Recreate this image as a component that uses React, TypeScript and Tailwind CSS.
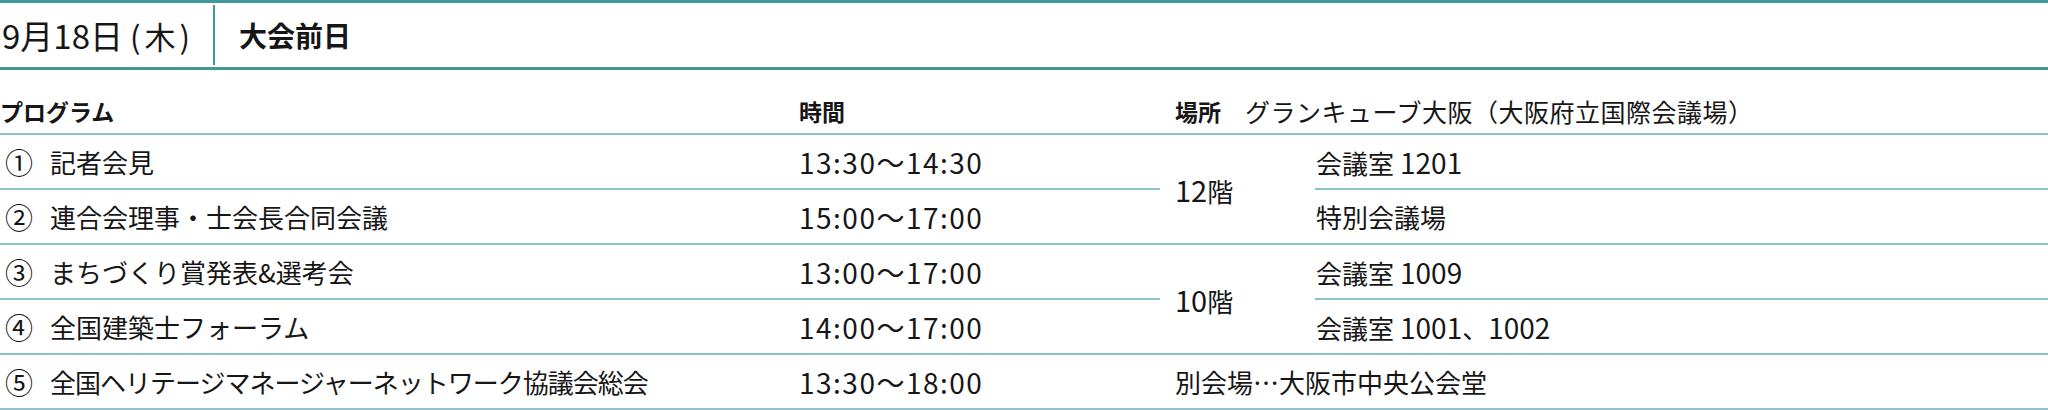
const rowLine = "border-b-2 border-[#8cc4c9]";

const Cell = ({ className = "", children }: { className?: string; children?: React.ReactNode }) => (
  <div className={`flex items-center h-[55px] ${rowLine} ${className}`}>
    <span>{children}</span>
  </div>
);

const Prog = ({ n, text, tight = false }: { n: string; text: string; tight?: boolean }) => (
  <div className={`flex items-center h-[55px] pl-[5px] ${rowLine}`}>
    <span className="text-[28px]">{n}</span>
    <span className={`ml-[17px] ${tight ? "tracking-[-1px]" : ""}`}>{text}</span>
  </div>
);

const Time = ({ t }: { t: string }) => (
  <Cell className="pl-[14px] text-[28px] tracking-[1.5px]">{t}</Cell>
);

const Num = ({ children }: { children: React.ReactNode }) => (
  <span className="text-[28px] ml-[6px]">{children}</span>
);

export default function App() {
  return (
    <div className="w-[2048px] h-[410px] bg-white text-[#161616] font-['Noto_Sans_CJK_JP','Noto_Sans',sans-serif]">
      <div className="flex h-[70px] border-t-[3px] border-b-[3px] border-[#3f9996]">
        <div className="w-[213px] flex items-center pl-[2px]">
          <span className="text-[33px] leading-none">9月18日</span>
          <span className="text-[31px] leading-none ml-[7px]">
            (<span className="mx-[4px]">木</span>)
          </span>
        </div>
        <div className="w-[2px] my-[2px] bg-[#3f9996]" />
        <div className="flex items-center pl-[24px] text-[28px] font-bold leading-none">大会前日</div>
      </div>

      <div className="grid grid-cols-[785px_375px_155px_1fr] text-[26px] leading-none">
        <div className="h-[65px] pt-[24px] leading-[34px] text-[23px] font-bold border-b-2 border-[#8cc4c9]">プログラム</div>
        <div className="h-[65px] pt-[24px] leading-[34px] text-[23px] font-bold border-b-2 border-[#8cc4c9] pl-[14px]">時間</div>
        <div className="col-span-2 h-[65px] pt-[24px] leading-[34px] border-b-2 border-[#8cc4c9] pl-[15px] flex">
          <span className="font-bold text-[23px]">場所</span>
          <span className="ml-[24px] text-[25px] tracking-[0.5px]">グランキューブ大阪（大阪府立国際会議場）</span>
        </div>

        <Prog n="①" text="記者会見" />
        <Time t="13:30〜14:30" />
        <div className={`row-span-2 flex items-center pl-[15px] ${rowLine}`}>
          <span><span className="text-[29px]">12</span>階</span>
        </div>
        <Cell className="pl-[1px]">会議室<Num>1201</Num></Cell>

        <Prog n="②" text="連合会理事・士会長合同会議" />
        <Time t="15:00〜17:00" />
        <Cell className="pl-[1px]">特別会議場</Cell>

        <Prog n="③" text="まちづくり賞発表&選考会" />
        <Time t="13:00〜17:00" />
        <div className={`row-span-2 flex items-center pl-[15px] ${rowLine}`}>
          <span><span className="text-[29px]">10</span>階</span>
        </div>
        <Cell className="pl-[1px]">会議室<Num>1009</Num></Cell>

        <Prog n="④" text="全国建築士フォーラム" />
        <Time t="14:00〜17:00" />
        <Cell className="pl-[1px]">会議室<Num>1001</Num>、<span className="text-[28px]">1002</span></Cell>

        <Prog n="⑤" text="全国ヘリテージマネージャーネットワーク協議会総会" tight />
        <Time t="13:30〜18:00" />
        <Cell className="col-span-2 pl-[15px]">別会場…大阪市中央公会堂</Cell>
      </div>
    </div>
  );
}
